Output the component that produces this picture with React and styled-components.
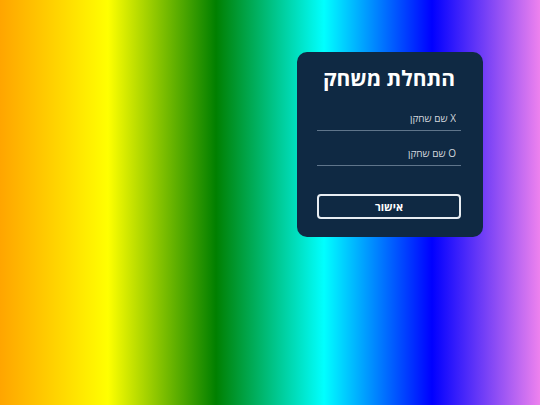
import styled, { createGlobalStyle } from "styled-components";

const GlobalStyle = createGlobalStyle`
  html, body {
    margin: 0;
    padding: 0;
  }
  body {
    font-family: "Open Sans", "Liberation Sans", "DejaVu Sans", sans-serif;
  }
`;

const Page = styled.div`
  width: 100vw;
  height: 100vh;
  box-sizing: border-box;
  display: flex;
  justify-content: flex-end;
  align-items: flex-start;
  padding: 52px 57px 0 0;
  background: linear-gradient(
    to right,
    orange,
    yellow,
    green,
    cyan,
    blue,
    violet
  );
`;

const Card = styled.form`
  width: 186px;
  height: 185px;
  box-sizing: border-box;
  padding: 13px 22px 0 20px;
  background-color: #0f2943;
  border-radius: 10px;
  direction: rtl;
  display: flex;
  flex-direction: column;
`;

const Title = styled.h1`
  margin: 0;
  color: #ffffff;
  font-size: 21px;
  font-weight: bold;
  text-align: center;
  line-height: 26px;
`;

const Field = styled.input`
  width: 100%;
  height: 26px;
  box-sizing: border-box;
  margin-top: ${(p) => p.$gap}px;
  padding: 0 5px;
  border: none;
  border-bottom: 1px solid #5f758b;
  background: transparent;
  color: #ffffff;
  font-family: inherit;
  font-size: 10px;
  direction: rtl;
  outline: none;

  &::placeholder {
    color: #d3d8de;
  }
`;

const Submit = styled.button`
  width: 100%;
  height: 25px;
  margin-top: 28px;
  box-sizing: border-box;
  border: 2px solid #e8edf2;
  border-radius: 4px;
  background: transparent;
  color: #ffffff;
  font-family: inherit;
  font-size: 11px;
  font-weight: bold;
  cursor: pointer;
`;

export default function App() {
  return (
    <>
      <GlobalStyle />
      <Page>
        <Card onSubmit={(e) => e.preventDefault()}>
          <Title>התחלת משחק</Title>
          <Field $gap={14} placeholder="X שם שחקן" />
          <Field $gap={9} placeholder="O שם שחקן" />
          <Submit type="submit">אישור</Submit>
        </Card>
      </Page>
    </>
  );
}
